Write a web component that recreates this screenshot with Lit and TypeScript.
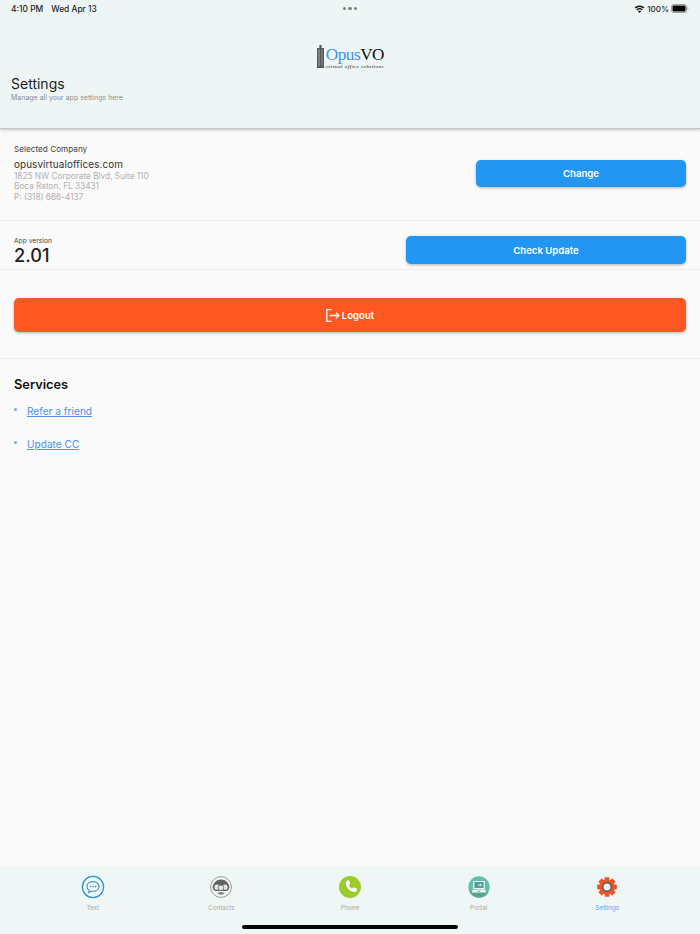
import { LitElement, html, svg, css } from 'lit';
import { customElement } from 'lit/decorators.js';

@customElement('app-root')
export class AppRoot extends LitElement {
  static styles = css`
    * {
      box-sizing: border-box;
    }
    :host {
      display: flex;
      flex-direction: column;
      position: relative;
      height: 934px;
      overflow: hidden;
      background: #fafafa;
      font-family: Inter, "Liberation Sans", sans-serif;
      color: #212121;
    }
    .header {
      height: 129px;
      background: #eef6f5;
      border-bottom: 1px solid #c4c9c8;
      box-shadow: 0 1px 3px rgba(0, 0, 0, 0.22);
      display: flex;
      flex-direction: column;
      flex: none;
      z-index: 1;
    }
    .status {
      height: 17px;
      padding: 0 11px;
      display: grid;
      grid-template-columns: 1fr auto 1fr;
      align-items: center;
      font-size: 8.4px;
      font-weight: 500;
      color: #1c1c1e;
    }
    .status .left {
      display: flex;
      gap: 8px;
    }
    .status .dots {
      display: flex;
      gap: 2px;
    }
    .status .dots i {
      width: 3.4px;
      height: 3.4px;
      border-radius: 50%;
      background: #7d8281;
    }
    .status .right {
      display: flex;
      justify-content: flex-end;
      align-items: center;
      gap: 2px;
      font-size: 8.1px;
    }
    .logo {
      margin-top: 28px;
      height: 30px;
      display: flex;
      justify-content: center;
      gap: 1px;
    }
    .logo .name {
      font-family: "Liberation Serif", serif;
      font-size: 17.2px;
      line-height: 19px;
      letter-spacing: -0.5px;
      color: #111;
    }
    .logo .name b {
      font-weight: 400;
      color: #3f94dc;
    }
    .logo .tag {
      font-family: "Liberation Serif", serif;
      font-style: italic;
      font-weight: 700;
      font-size: 5px;
      line-height: 6px;
      letter-spacing: 0.5px;
      white-space: nowrap;
      color: #5c6260;
    }
    .title {
      margin: 0 0 0 11px;
    }
    .title h1 {
      margin: 0;
      font-size: 14px;
      line-height: 18px;
      font-weight: 400;
      color: #1d1d1d;
    }
    .title p {
      margin: 0;
      font-size: 7px;
      line-height: 9px;
      color: #8b8f8f;
    }
    .company {
      height: 92px;
      padding: 15px 14px 0;
      display: flex;
      justify-content: space-between;
      border-bottom: 1px solid #eeeeee;
      flex: none;
    }
    .company .label {
      font-size: 8.2px;
      line-height: 11px;
      color: #444;
    }
    .company .name {
      margin-top: 3px;
      font-size: 9.9px;
      line-height: 13px;
      letter-spacing: 0.1px;
      color: #333;
    }
    .company .addr {
      font-size: 8.25px;
      line-height: 10.4px;
      color: #b0b0b0;
    }
    .btn {
      border: none;
      border-radius: 5px;
      color: #fff;
      font: inherit;
      font-size: 9.6px;
      font-weight: 600;
      background: #2196f3;
      box-shadow: 0 1px 3px rgba(0, 0, 0, 0.3);
      display: flex;
      align-items: center;
      justify-content: center;
      padding: 0;
    }
    .change {
      width: 210px;
      height: 27px;
      margin-top: 16px;
      padding-bottom: 1px;
    }
    .version {
      height: 49px;
      padding: 16px 14px 0;
      display: flex;
      justify-content: space-between;
      border-bottom: 1px solid #eeeeee;
      flex: none;
    }
    .version .label {
      font-size: 6.7px;
      line-height: 9px;
      color: #444;
    }
    .version .num {
      font-size: 18.2px;
      line-height: 18px;
      font-weight: 500;
      color: #222;
    }
    .check {
      width: 280px;
      height: 28px;
      margin-top: -1px;
    }
    .logout-row {
      height: 89px;
      padding: 28px 14px 0;
      border-bottom: 1px solid #eeeeee;
      flex: none;
    }
    .logout {
      width: 100%;
      height: 34px;
      background: #ff5722;
      gap: 2px;
    }
    .services {
      padding: 18px 14px 0;
      flex: 1;
    }
    .services h2 {
      margin: 0 0 11px;
      font-size: 12.8px;
      line-height: 16px;
      font-weight: 600;
      color: #111;
    }
    .services ul {
      margin: 0;
      padding: 0;
      list-style: none;
      display: flex;
      flex-direction: column;
      gap: 19px;
    }
    .services li {
      display: flex;
      align-items: center;
      gap: 10px;
      height: 14px;
    }
    .services li i {
      width: 3px;
      height: 3px;
      border-radius: 50%;
      background: #6ea8ef;
      margin-top: -3px;
    }
    .services a {
      font-size: 10.15px;
      color: #4f91ee;
      text-decoration: underline;
    }
    .tabs {
      height: 68px;
      background: #eff6f6;
      padding: 9px 28px 0;
      display: flex;
      justify-content: center;
      flex: none;
    }
    .tab {
      width: 128.6px;
      display: flex;
      flex-direction: column;
      align-items: center;
      gap: 5px;
      font-size: 6.2px;
      line-height: 8px;
      color: #a3a8a8;
    }
    .tab svg {
      display: block;
    }
    .tab.active {
      color: #5aa5f2;
    }
    .portal {
      margin: 1px 0;
    }
    .home {
      position: absolute;
      left: 242px;
      bottom: 5px;
      width: 216px;
      height: 4px;
      border-radius: 2px;
      background: #050505;
    }
  `;

  renderTab(label: string, icon: unknown, active = false) {
    return html`
      <div class="tab ${active ? 'active' : ''}">
        ${icon}
        <span>${label}</span>
      </div>
    `;
  }

  render() {
    const textIcon = html`<svg width="24" height="24" viewBox="0 0 24 24">
      <circle cx="12" cy="12" r="10.6" fill="#f2f8f8" stroke="#2f93d3" stroke-width="1.3" />
      <path d="M12 6.6c-3.6 0-6 2.1-6 4.9 0 1.6.8 2.9 2.2 3.8l-.4 2.3 2.7-1.5c.5.1 1 .2 1.5.2 3.6 0 6-2.2 6-4.8s-2.4-4.9-6-4.9z" fill="none" stroke="#2f93d3" stroke-width="1.1" />
      <circle cx="9.4" cy="11.6" r=".8" fill="#2f93d3" />
      <circle cx="12" cy="11.6" r=".8" fill="#2f93d3" />
      <circle cx="14.6" cy="11.6" r=".8" fill="#2f93d3" />
    </svg>`;
    const contactsIcon = html`<svg width="24" height="24" viewBox="0 0 24 24">
      <circle cx="12" cy="12" r="10.4" fill="#f2f6f6" stroke="#9a9c9c" stroke-width="1" />
      <path d="M3.6 12.4c.4-4.4 4-7.8 8.4-7.8s8 3.4 8.4 7.8c-.6 2-1.4 3-2.4 3.6H6c-1-.6-1.8-1.6-2.4-3.6z" fill="#636363" />
      <circle cx="8" cy="12.2" r="2.6" fill="#e4e8e8" />
      <circle cx="16" cy="12.2" r="2.6" fill="#e4e8e8" />
      <circle cx="12" cy="12.8" r="2.8" fill="#e4e8e8" stroke="#636363" stroke-width=".8" />
      <path d="M8.4 18.6c.8-2.2 6.4-2.2 7.2 0-1 .8-2.2 1.2-3.6 1.2s-2.6-.4-3.6-1.2z" fill="#8a8c8c" />
    </svg>`;
    const phoneIcon = html`<svg width="24" height="24" viewBox="0 0 24 24">
      <circle cx="12" cy="12" r="11" fill="#9ccb2c" />
      <path d="M8.7 5.9l1.5-.6c.4-.1.7 0 .9.4l1.1 2.5c.1.3 0 .7-.2.9l-1.2 1c.6 1.6 1.8 2.9 3.4 3.7l1-1.2c.2-.3.6-.4.9-.2l2.4 1.1c.4.2.5.5.4.9l-.5 1.5c-.2.7-.8 1.1-1.5 1.1-4.8-.3-8.8-4.2-9.2-9.1 0-.8.4-1.5 1-1.9z" fill="#fff" />
    </svg>`;
    const portalIcon = html`<svg class="portal" width="22" height="22" viewBox="0 0 22 22">
      <circle cx="11" cy="11" r="10.7" fill="#62bfa9" />
      <path d="M1.4 15.4h19.2A10.7 10.7 0 0 1 11 21.7 10.7 10.7 0 0 1 1.4 15.4z" fill="#54a892" />
      <rect x="5.2" y="5" width="11.6" height="8" fill="#eef7f5" />
      <rect x="6.4" y="6" width="9.2" height="6" fill="#4e9f95" />
      <path d="M10 8.6h2.4V7.6l1.6 1.4-1.6 1.4V9.6H10z" fill="#eef7f5" />
      <path d="M5 13.4h12l1.4 3.2H3.6z" fill="#f4fafa" />
      <rect x="9.4" y="14.8" width="3.2" height="1" fill="#62bfa9" />
    </svg>`;
    const gearIcon = html`<svg width="24" height="24" viewBox="0 0 24 24">
      <g fill="#f0532a">
        ${[0, 45, 90, 135].map(
          (a) => svg`<rect x="9.6" y="2.2" width="4.8" height="19.6" rx=".6" transform="rotate(${a} 12 12)" />`
        )}
        <circle cx="12" cy="12" r="7.6" />
      </g>
      <circle cx="12" cy="12" r="4.2" fill="#eef4f4" stroke="#4f5a63" stroke-width="1.4" />
    </svg>`;

    return html`
      <header class="header">
        <div class="status">
          <div class="left"><span>4:10 PM</span><span>Wed Apr 13</span></div>
          <div class="dots"><i></i><i></i><i></i></div>
          <div class="right">
            <svg width="11" height="8" viewBox="0 0 11 8">
              <path d="M5.5 8 3.9 6.2a2.3 2.3 0 0 1 3.2 0zM3.2 5.4 2.3 4.4a4.6 4.6 0 0 1 6.4 0l-.9 1a3.3 3.3 0 0 0-4.6 0zM1.6 3.6.6 2.6a7 7 0 0 1 9.8 0l-1 1a5.6 5.6 0 0 0-7.8 0z" fill="#111" />
            </svg>
            <span>100%</span>
            <svg width="18" height="9" viewBox="0 0 18 9">
              <rect x=".5" y=".5" width="15" height="8" rx="2" fill="none" stroke="#9a9e9e" />
              <rect x="1.5" y="1.5" width="13" height="6" rx="1" fill="#000" />
              <path d="M16.4 3v3c.6-.2 1-.8 1-1.5s-.4-1.3-1-1.5z" fill="#9a9e9e" />
            </svg>
          </div>
        </div>
        <div class="logo">
          <svg class="mark" width="9" height="23" viewBox="0 0 9 23">
            <path d="M3.4 0h2.2v3H8v19.4l1 .6H0l1-.6V3h2.4z" fill="#55595a" />
            <rect x="2.4" y="4.2" width="1.4" height="17" fill="#8d9192" />
            <rect x="5.2" y="4.2" width="1.4" height="17" fill="#7c8081" />
          </svg>
          <div>
            <div class="name"><b>Opus</b>VO</div>
            <div class="tag">virtual office solutions</div>
          </div>
        </div>
        <div class="title">
          <h1>Settings</h1>
          <p>Manage all your app settings here</p>
        </div>
      </header>

      <section class="company">
        <div>
          <div class="label">Selected Company</div>
          <div class="name">opusvirtualoffices.com</div>
          <div class="addr">1825 NW Corporate Blvd, Suite 110</div>
          <div class="addr">Boca Raton, FL 33431</div>
          <div class="addr">P: (318) 666-4137</div>
        </div>
        <button class="btn change">Change</button>
      </section>

      <section class="version">
        <div>
          <div class="label">App version</div>
          <div class="num">2.01</div>
        </div>
        <button class="btn check">Check Update</button>
      </section>

      <section class="logout-row">
        <button class="btn logout">
          <svg width="14" height="13" viewBox="0 0 14 13" fill="none" stroke="#fff" stroke-width="1.3">
            <path d="M5.5 .7H.8v11.6h4.7" />
            <path d="M3.6 6.5h9.4M10 3.6l3 2.9-3 2.9" />
          </svg>
          Logout
        </button>
      </section>

      <section class="services">
        <h2>Services</h2>
        <ul>
          <li><i></i><a href="#">Refer a friend</a></li>
          <li><i></i><a href="#">Update CC</a></li>
        </ul>
      </section>

      <nav class="tabs">
        ${this.renderTab('Text', textIcon)}
        ${this.renderTab('Contacts', contactsIcon)}
        ${this.renderTab('Phone', phoneIcon)}
        ${this.renderTab('Portal', portalIcon)}
        ${this.renderTab('Settings', gearIcon, true)}
      </nav>
      <div class="home"></div>
    `;
  }
}
